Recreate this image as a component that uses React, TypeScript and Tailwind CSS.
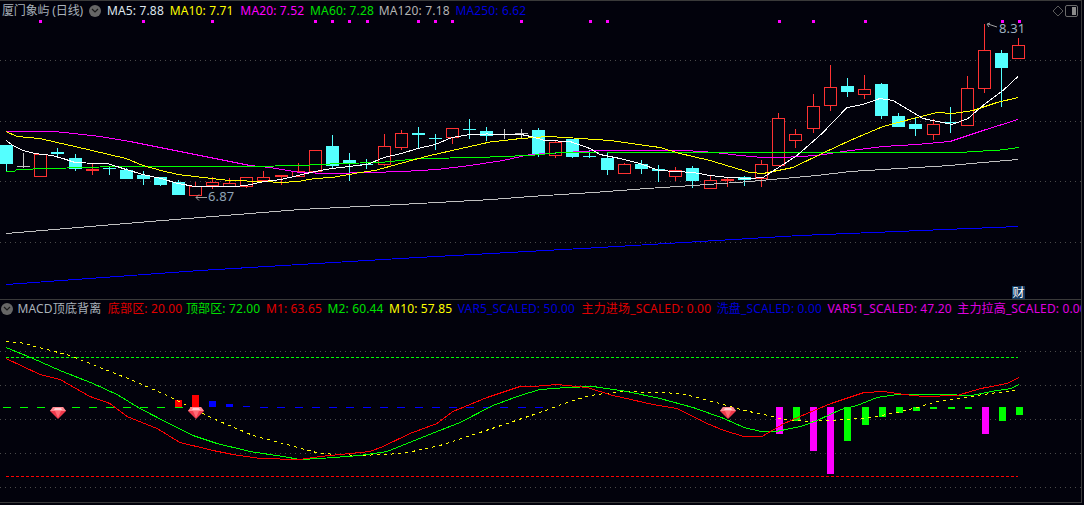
import React from "react";

type Candle = [number, number, number, number, string];
type Pt = [number, number];

// top, bottom, high, low, kind (c cyan, r red hollow, f red solid, g gray)
const candles: Candle[] = [
  [145, 164, 145, 171, "c"], [166, 166, 153, 168, "g"], [154, 176, 154, 176, "r"], [152, 154, 148, 157, "c"],
  [158, 169, 154, 171, "c"], [169, 171, 163, 175, "f"], [168, 168, 166, 175, "c"], [170, 179, 168, 179, "c"],
  [175, 179, 171, 185, "c"], [177, 185, 177, 186, "c"], [182, 195, 180, 195, "c"], [186, 195, 182, 195, "r"],
  [182, 185, 177, 189, "r"], [183, 186, 178, 186, "r"], [177, 186, 177, 188, "r"], [177, 180, 171, 180, "r"],
  [175, 177, 175, 185, "f"], [171, 176, 163, 176, "r"], [150, 171, 150, 174, "r"], [146, 166, 135, 168, "c"],
  [160, 163, 153, 181, "c"], [164, 164, 159, 169, "c"], [146, 164, 134, 166, "r"], [133, 147, 130, 150, "r"],
  [133, 135, 127, 148, "c"], [138, 138, 134, 150, "c"], [128, 137, 128, 144, "r"], [129, 129, 119, 139, "c"],
  [131, 136, 127, 141, "c"], [134, 134, 129, 139, "g"], [133, 133, 129, 138, "g"], [130, 154, 128, 157, "c"],
  [142, 155, 140, 158, "r"], [139, 157, 139, 158, "c"], [156, 156, 150, 158, "c"], [158, 170, 152, 175, "c"],
  [164, 173, 163, 173, "r"], [164, 169, 160, 174, "c"], [169, 171, 165, 182, "c"], [170, 176, 167, 181, "r"],
  [168, 181, 166, 188, "c"], [180, 188, 175, 188, "r"], [179, 181, 178, 187, "f"], [177, 180, 176, 186, "c"],
  [164, 178, 160, 187, "r"], [118, 165, 113, 165, "r"], [134, 140, 129, 148, "r"], [106, 128, 94, 133, "r"],
  [87, 105, 65, 111, "r"], [86, 92, 78, 97, "c"], [89, 94, 75, 99, "r"], [84, 116, 83, 119, "c"],
  [116, 127, 113, 127, "c"], [124, 129, 118, 136, "c"], [124, 134, 119, 140, "r"], [122, 122, 107, 133, "c"],
  [88, 125, 76, 125, "r"], [50, 88, 24, 93, "r"], [53, 68, 50, 107, "c"], [45, 58, 38, 58, "r"],
];

const ma5: Pt[] = [[6, 140], [13, 145], [23, 150], [35, 153], [52, 155], [63, 158], [75, 162], [109, 163.5], [117, 166], [126, 169], [143, 174], [161, 178], [178, 183], [195, 186], [229, 186.5], [246, 185], [264, 181], [281, 179], [298, 175], [315, 171], [332, 168], [349, 166], [367, 164], [384, 157], [401, 153], [418, 148], [435, 144], [452, 137], [470, 134], [487, 133.5], [521, 134], [531, 136], [545, 140], [570, 141], [590, 148], [600, 154], [620, 158], [640, 163], [659, 170], [693, 172], [710, 175], [729, 177], [750, 178], [763, 177], [797, 155], [822, 133], [847, 107], [863, 104], [880, 98], [893, 100], [923, 118], [952, 124], [968, 118], [983, 105], [1003, 90], [1018, 76]];
const ma10: Pt[] = [[6, 131], [17, 136], [40, 138], [57, 142], [75, 146], [92, 150], [126, 158], [143, 165], [161, 170], [178, 174], [195, 176], [212, 178], [229, 180], [264, 181], [281, 182], [298, 181], [315, 178], [332, 177], [349, 174], [360, 172], [375, 170], [400, 163], [430, 155], [470, 146], [490, 141.5], [521, 138], [548, 136], [566, 137], [610, 140], [660, 147], [680, 153], [710, 160], [750, 172], [763, 173], [793, 167], [822, 153], [850, 140], [883, 126], [917, 117], [937, 112], [953, 113], [973, 110], [997, 102], [1018, 97]];
const ma20: Pt[] = [[6, 130.5], [48, 130.5], [65, 132], [100, 136], [130, 141], [165, 148], [200, 155], [240, 163], [250, 165], [270, 167], [300, 172], [330, 173], [370, 172], [403, 171], [437, 169], [470, 165], [503, 160], [530, 154], [565, 152], [598, 150], [685, 150], [715, 152], [740, 155], [763, 157], [783, 157], [817, 155], [843, 151], [883, 146], [917, 144], [950, 141], [983, 130], [1018, 119]];
const ma60: Pt[] = [[6, 170.5], [15, 170.5], [17, 169], [50, 168], [100, 166.5], [250, 166], [300, 165], [340, 163], [380, 162], [420, 158], [480, 157], [500, 156], [530, 155], [560, 152], [600, 151.5], [840, 152], [960, 152], [975, 151], [1000, 149.5], [1019, 147]];
const ma120: Pt[] = [[6, 233], [150, 221], [300, 209], [400, 204], [492, 199], [530, 196], [593, 192], [647, 188], [693, 185], [750, 181], [783, 178], [817, 175], [850, 171], [883, 169], [917, 167], [950, 165], [983, 162], [1018, 159]];
const ma250: Pt[] = [[6, 284], [200, 270], [400, 258], [600, 247], [800, 235], [1018, 226]];

const m10: Pt[] = [[6, 341], [20, 342], [43, 348], [70, 355], [100, 367], [133, 380], [167, 395], [187, 405], [213, 418], [253, 435], [283, 443], [320, 453], [360, 455], [403, 453], [440, 445], [477, 433], [507, 423], [540, 412], [567, 402], [590, 395], [620, 391], [660, 392], [680, 393], [693, 396], [727, 405], [744, 410], [764, 414], [784, 419], [811, 421], [844, 419], [864, 418], [881, 415], [897, 412], [917, 407], [937, 401], [957, 398], [977, 395], [997, 392], [1017, 390]];
const m2: Pt[] = [[6, 347], [33, 358], [60, 370], [93, 383], [117, 394], [140, 408], [167, 422], [193, 435], [217, 443], [250, 451], [283, 456], [300, 459], [320, 458], [360, 455], [387, 451], [427, 435], [460, 422], [493, 405], [520, 395], [540, 389], [567, 387], [593, 386], [627, 391], [660, 398], [693, 407], [724, 418], [744, 427], [761, 431], [776, 431], [801, 426], [817, 420], [841, 409], [857, 405], [877, 397], [897, 394], [941, 394], [972, 395], [991, 391], [1011, 388], [1019, 384]];
const m1: Pt[] = [[6, 358], [40, 374], [60, 379], [90, 396], [110, 403], [127, 416], [157, 428], [180, 442], [213, 450], [233, 454], [260, 458], [300, 459], [320, 456], [360, 452], [370, 451], [383, 446], [410, 433], [437, 423], [453, 411], [487, 397], [520, 386], [533, 386], [557, 384], [587, 387], [613, 395], [653, 404], [677, 408], [707, 423], [724, 430], [744, 436], [762, 436], [784, 423], [807, 413], [831, 403], [864, 392], [884, 391], [904, 394], [924, 396], [957, 395], [981, 388], [1007, 383], [1019, 377]];

// x, far end of bar, colour; every bar hangs from or sits on y=407
const bars: [number, number, string][] = [
  [175, 400, "#ff0000"], [192, 395, "#ff0000"], [209, 401, "#0000ff"], [226, 404, "#0000ff"], [243, 406, "#0000ff"],
  [776, 434, "#ff00ff"], [793, 421, "#00ff00"], [810, 451, "#ff00ff"], [827, 474, "#ff00ff"], [844, 441, "#00ff00"],
  [862, 425, "#00ff00"], [879, 417, "#00ff00"], [896, 413, "#00ff00"], [913, 411, "#00ff00"], [930, 409, "#00ff00"],
  [948, 409, "#00ff00"], [965, 409, "#00ff00"], [982, 434, "#ff00ff"], [999, 421, "#00ff00"], [1016, 415, "#00ff00"],
];

const markers = [39, 142, 211, 314, 331, 348, 366, 417, 434, 451, 520, 589, 606, 778, 812, 864, 1001, 1018];

const pts = (p: Pt[]) => p.map(([x, y]) => `${x},${y + 0.5}`).join(" ");

const Line = ({ p, color, dash }: { p: Pt[]; color: string; dash?: string }) => (
  <polyline points={pts(p)} fill="none" stroke={color} strokeWidth={1} strokeDasharray={dash} shapeRendering="crispEdges" />
);

const Grid = ({ y }: { y: number }) => (
  <line x1={0} x2={1081} y1={y + 0.5} y2={y + 0.5} stroke="#4a4a4a" strokeDasharray="1 4" shapeRendering="crispEdges" />
);

const CandleMark = ({ c, i }: { c: Candle; i: number }) => {
  const [top, bottom, high, low, kind] = c;
  const x = Math.round(6 + 17.16 * i) + 0.5;
  const color = kind === "c" ? "#54ffff" : kind === "g" ? "#c4c4c4" : "#ff3232";
  if (top === bottom) {
    return (
      <g stroke={color} shapeRendering="crispEdges">
        <line x1={x} x2={x} y1={high} y2={low} />
        <line x1={x - 6.5} x2={x + 6.5} y1={top + 0.5} y2={top + 0.5} />
      </g>
    );
  }
  return (
    <g shapeRendering="crispEdges">
      <line x1={x} x2={x} y1={high} y2={top} stroke={color} />
      <line x1={x} x2={x} y1={bottom} y2={low} stroke={color} />
      {kind === "r" ? (
        <rect x={x - 6} y={top + 0.5} width={12} height={bottom - top} fill="#02020c" stroke={color} />
      ) : (
        <rect x={x - 6.5} y={top} width={13} height={bottom - top} fill={color} />
      )}
    </g>
  );
};

const Gem = ({ x }: { x: number }) => (
  <g transform={`translate(${x - 8} 407)`}>
    <polygon points="3,0 13,0 16,4 8,12 0,4" fill="#f03a4c" />
    <polygon points="3,0 13,0 16,4 0,4" fill="#ff8a92" />
    <polygon points="5,4 11,4 8,11" fill="#ff6a76" />
    <polygon points="5,1 11,1 12,3 4,3" fill="#ffd0d4" />
  </g>
);

const Chevron = () => (
  <span className="flex h-3 w-3 shrink-0 items-center justify-center rounded-full bg-[#666666]">
    <svg width="8" height="5" viewBox="0 0 8 5">
      <path d="M1 1l3 3 3-3" fill="none" stroke="#1a1a1a" strokeWidth="1.2" />
    </svg>
  </span>
);

const Item = ({ className, children }: { className: string; children: React.ReactNode }) => (
  <span className={`shrink-0 whitespace-pre ${className}`}>{children}</span>
);

export default function App() {
  const longDash = Array.from({ length: 32 }, (_, i) => 3 + i * 17.15).filter((x) => x < 175 || x > 255);
  return (
    <div className="h-[505px] w-[1084px] overflow-hidden bg-[#02020c] font-['Noto_Sans','Noto_Sans_CJK_SC',sans-serif] text-[12px] leading-[17px] tracking-[0.15px]">
      <div className="w-[1082px] border-r border-t border-[#3a3a3a]">
        {/* K line panel */}
        <div className="h-[299px] border-b border-[#3a3a3a]">
          <div className="flex h-[19px] items-center gap-[5.75px] pl-[2px]">
            <Item className="tracking-[-0.15px] text-[#a9b2bb]">厦门象屿 (日线)</Item>
            <span className="ml-[0.5px]"><Chevron /></span>
            <Item className="text-[#dfe6ee]">MA5: 7.88</Item>
            <Item className="text-[#ffff00]">MA10: 7.71</Item>
            <Item className="ml-[1px] text-[#ff00ff]">MA20: 7.52</Item>
            <Item className="text-[#00e000]">MA60: 7.28</Item>
            <Item className="-ml-[1px] text-[#b4b4b4]">MA120: 7.18</Item>
            <Item className="text-[#0000d8]">MA250: 6.62</Item>
            <div className="ml-auto flex items-center gap-[1px] pr-[3px]">
              <svg width="12" height="12" viewBox="0 0 12 12">
                <path d="M6 1l5 5-5 5-5-5z" fill="none" stroke="#5a5a5a" />
              </svg>
              <svg width="13" height="12" viewBox="0 0 13 12">
                <rect x="0.5" y="0.5" width="12" height="11" rx="1.5" fill="none" stroke="#6a6a6a" />
                <rect x="7" y="2" width="4" height="8" fill="#8a8a8a" />
              </svg>
            </div>
          </div>
          <div className="relative">
            <svg width={1081} height={279} viewBox="0 20 1081 279" className="block">
              <Grid y={60} />
              <Grid y={121} />
              <Grid y={181} />
              <Grid y={242} />
              {markers.map((x) => (
                <rect key={x} x={x} y={20} width={3} height={3} fill="#ff00ff" />
              ))}
              {candles.map((c, i) => (
                <CandleMark key={i} c={c} i={i} />
              ))}
              <Line p={ma250} color="#0000ff" />
              <Line p={ma120} color="#c0c0c0" />
              <Line p={ma20} color="#ff00ff" />
              <Line p={ma60} color="#00ff00" />
              <Line p={ma10} color="#ffff00" />
              <Line p={ma5} color="#ffffff" />
              <path d="M207 197.5h-11m3-3l-3 3 3 3" fill="none" stroke="#a0a0a0" />
              <text x={208} y={201} fontSize={13} fill="#8fa3b5">6.87</text>
              <path d="M997 27l-9-3m2-1l-3 1 2 3" fill="none" stroke="#a0a0a0" />
              <text x={999} y={33} fontSize={13} fill="#9fb0bf">8.31</text>
            </svg>
            <span className="absolute bottom-0 left-[1012px] flex h-[13px] w-[13px] items-center justify-center bg-[#12395f] text-[12px] text-white">财</span>
          </div>
        </div>
        {/* indicator panel */}
        <div className="h-[203px] border-b border-[#3a3a3a]">
          <div className="flex h-[17px] items-center gap-[5.5px] overflow-hidden pl-[1px]">
            <Chevron />
            <Item className="-ml-[1px] text-[#a9b2bb]">MACD顶底背离</Item>
            <Item className="ml-[1px] text-[#e00000]">底部区: 20.00</Item>
            <Item className="-ml-[2px] text-[#00e000]">顶部区: 72.00</Item>
            <Item className="text-[#e00000]">M1: 63.65</Item>
            <Item className="text-[#00e000]">M2: 60.44</Item>
            <Item className="text-[#ffff00]">M10: 57.85</Item>
            <Item className="text-[#0000d8]">VAR5_SCALED: 50.00</Item>
            <Item className="ml-[1px] text-[#e00000]">主力进场_SCALED: 0.00</Item>
            <Item className="text-[#0000d8]">洗盘_SCALED: 0.00</Item>
            <Item className="text-[#e000e0]">VAR51_SCALED: 47.20</Item>
            <Item className="text-[#e000e0]">主力拉高_SCALED: 0.00</Item>
          </div>
          <svg width={1081} height={185} viewBox="0 317 1081 185" className="block">
            <Grid y={351} />
            <Grid y={385} />
            <Grid y={419} />
            <Grid y={453} />
            <Grid y={487} />
            <line x1={6} x2={1018} y1={357.5} y2={357.5} stroke="#00ff00" strokeDasharray="3 2" shapeRendering="crispEdges" />
            <line x1={6} x2={1018} y1={476.5} y2={476.5} stroke="#ff0000" strokeDasharray="3 2" shapeRendering="crispEdges" />
            {longDash.map((x) => (
              <line key={x} x1={x} x2={x + 8} y1={407.5} y2={407.5} stroke={x < 175 ? "#00ff00" : "#0000ff"} shapeRendering="crispEdges" />
            ))}
            {bars.map(([x, end, color]) => (
              <rect key={x} x={x} y={Math.min(407, end)} width={7} height={Math.abs(end - 407)} fill={color} />
            ))}
            <Line p={m10} color="#ffff00" dash="3 4" />
            <Line p={m2} color="#00ff00" />
            <Line p={m1} color="#ff0000" />
            <Gem x={58} />
            <Gem x={196} />
            <Gem x={728} />
          </svg>
        </div>
      </div>
    </div>
  );
}
